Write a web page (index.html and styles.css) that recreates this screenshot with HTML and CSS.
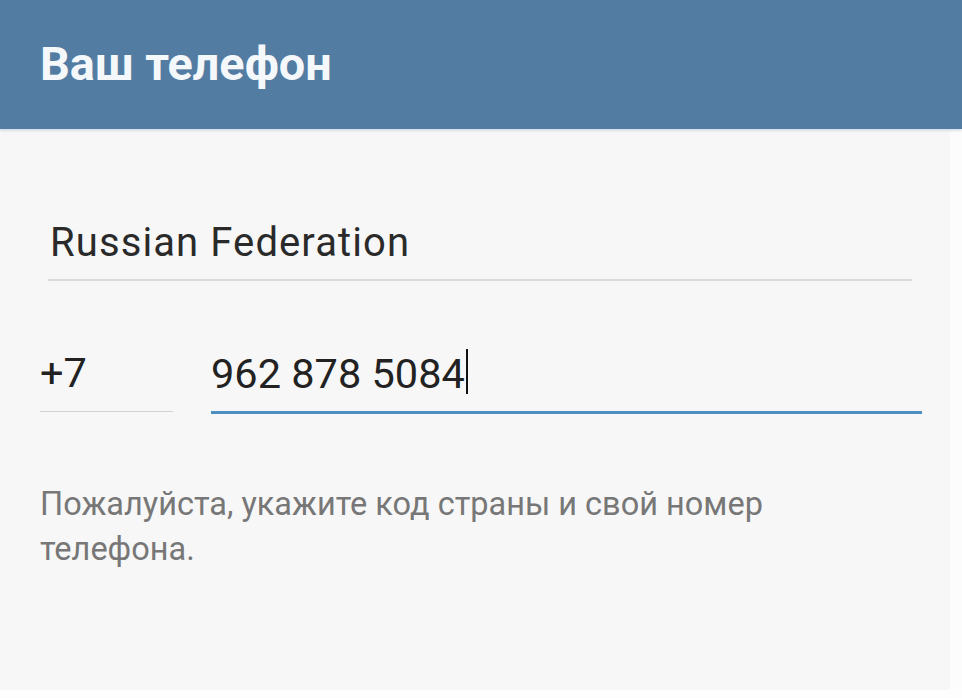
FILE: index.html
```html
<!DOCTYPE html>
<html lang="ru">
<head>
<meta charset="utf-8">
<title>Ваш телефон</title>
<link rel="stylesheet" href="styles.css">
</head>
<body>
<div class="app">
  <header class="topbar">
    <h1 class="title">Ваш телефон</h1>
  </header>
  <main class="form">
    <div class="country">Russian Federation</div>
    <div class="phone-row">
      <div class="code">+7</div>
      <div class="number">962 878 5084<span class="cursor"></span></div>
    </div>
    <p class="hint">Пожалуйста, укажите код страны и свой номер телефона.</p>
  </main>
</div>
</body>
</html>
```

FILE: styles.css
```css
html, body {
  margin: 0;
  padding: 0;
}
body {
  background: #fdfdfd;
  font-family: Roboto, "Noto Sans", "Liberation Sans", sans-serif;
  width: 962px;
  height: 698px;
  overflow: hidden;
}
.app {
  width: 962px;
  height: 690px;
  background: linear-gradient(to right, #f7f7f7 0, #f7f7f7 950px, #fcfcfc 950px);
}
.topbar {
  height: 129px;
  background: #537ca2;
  display: flex;
  align-items: center;
  padding-left: 40px;
  box-shadow: 0 2px 2px rgba(120, 150, 190, 0.25);
}
.title {
  margin: 0;
  color: #f4f8fb;
  font-size: 46.8px;
  font-weight: 700;
  line-height: 1.172;
}
.form {
  padding: 0 40px;
}
.country {
  margin: 90px 0 0 8px;
  width: 862px;
  padding: 0 0 12px 2px;
  font-size: 40px;
  letter-spacing: 1.1px;
  line-height: 48px;
  color: #2a2a2a;
  border-bottom: 2px solid #dadada;
}
.phone-row {
  display: flex;
  align-items: flex-start;
  gap: 38px;
  margin-top: 68px;
  font-size: 41.5px;
  line-height: 48px;
  color: #222;
}
.code {
  width: 133px;
  padding-bottom: 14px;
  border-bottom: 1px solid #d2d2d2;
}
.number {
  width: 711px;
  padding-bottom: 13px;
  border-bottom: 3px solid #4c8fc0;
}
.cursor {
  display: inline-block;
  width: 2px;
  height: 45px;
  background: #111;
  vertical-align: -6px;
  margin-left: 1px;
}
.hint {
  margin: 68px 0 0;
  width: 760px;
  font-size: 32.5px;
  line-height: 45px;
  color: #777;
}
```
